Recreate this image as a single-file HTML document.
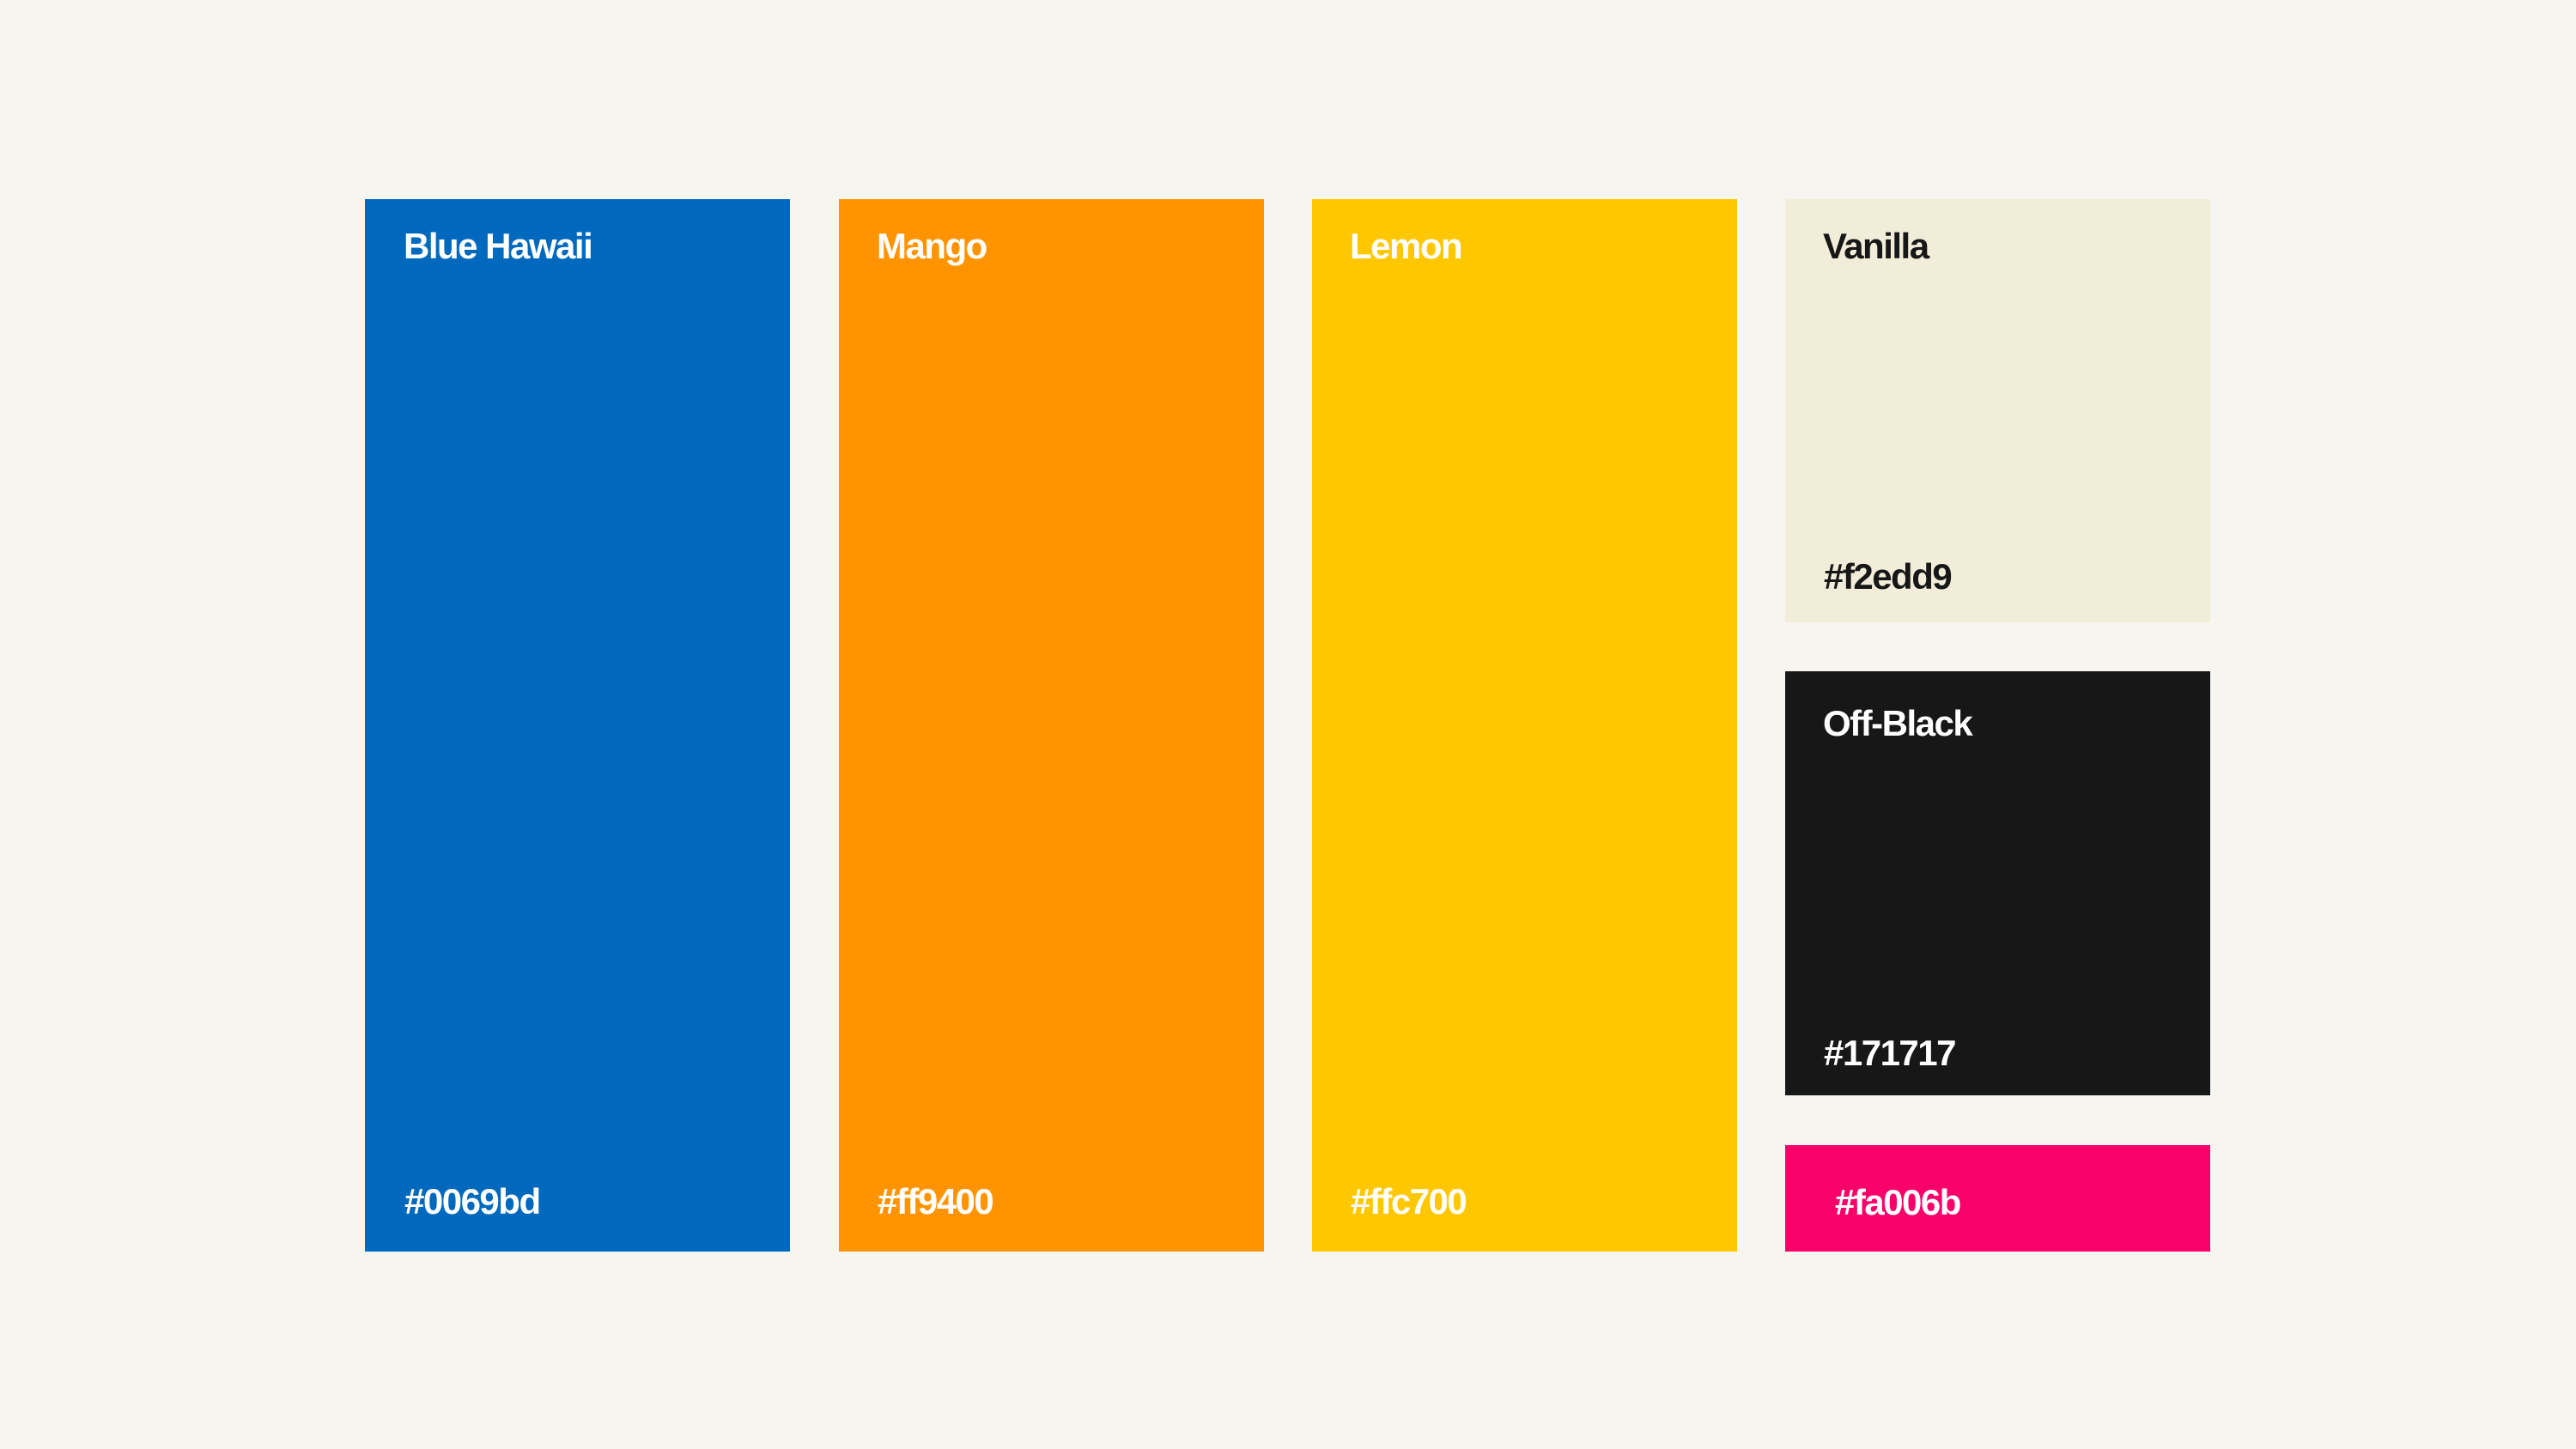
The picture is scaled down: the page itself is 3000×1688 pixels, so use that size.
<!DOCTYPE html>
<html><head><meta charset="utf-8"><style>
html,body{margin:0;padding:0}
body{width:3000px;height:1688px;background:#f6f5f0;position:relative;overflow:hidden;font-family:"Liberation Sans",sans-serif;font-weight:bold}
.b{position:absolute}
.t{position:absolute;font-size:42px;line-height:1;letter-spacing:-1.5px;white-space:nowrap}
</style></head><body>
<div class="b" style="left:425px;top:232px;width:495px;height:1226px;background:#0069bd"></div>
<div class="b" style="left:977px;top:232px;width:495px;height:1226px;background:#ff9400"></div>
<div class="b" style="left:1528px;top:232px;width:495px;height:1226px;background:#ffc700"></div>
<div class="b" style="left:2079px;top:232px;width:495px;height:493px;background:#f2edd9"></div>
<div class="b" style="left:2079px;top:782px;width:495px;height:494px;background:#171717"></div>
<div class="b" style="left:2079px;top:1334px;width:495px;height:124px;background:#fa006b"></div>

<div class="t" style="left:470px;top:266px;color:#fff">Blue Hawaii</div>
<div class="t" style="left:1021px;top:266px;color:#fff">Mango</div>
<div class="t" style="left:1572px;top:266px;color:#fff">Lemon</div>
<div class="t" style="left:2123px;top:266px;color:#171717">Vanilla</div>
<div class="t" style="left:2123px;top:822px;color:#fff">Off-Black</div>

<div class="t" style="left:471px;top:1379px;color:#fff">#0069bd</div>
<div class="t" style="left:1022px;top:1379px;color:#fff">#ff9400</div>
<div class="t" style="left:1573px;top:1379px;color:#fff">#ffc700</div>
<div class="t" style="left:2124px;top:651px;color:#171717">#f2edd9</div>
<div class="t" style="left:2124px;top:1206px;color:#fff">#171717</div>
<div class="t" style="left:2137px;top:1380px;color:#fff">#fa006b</div>
</body></html>
